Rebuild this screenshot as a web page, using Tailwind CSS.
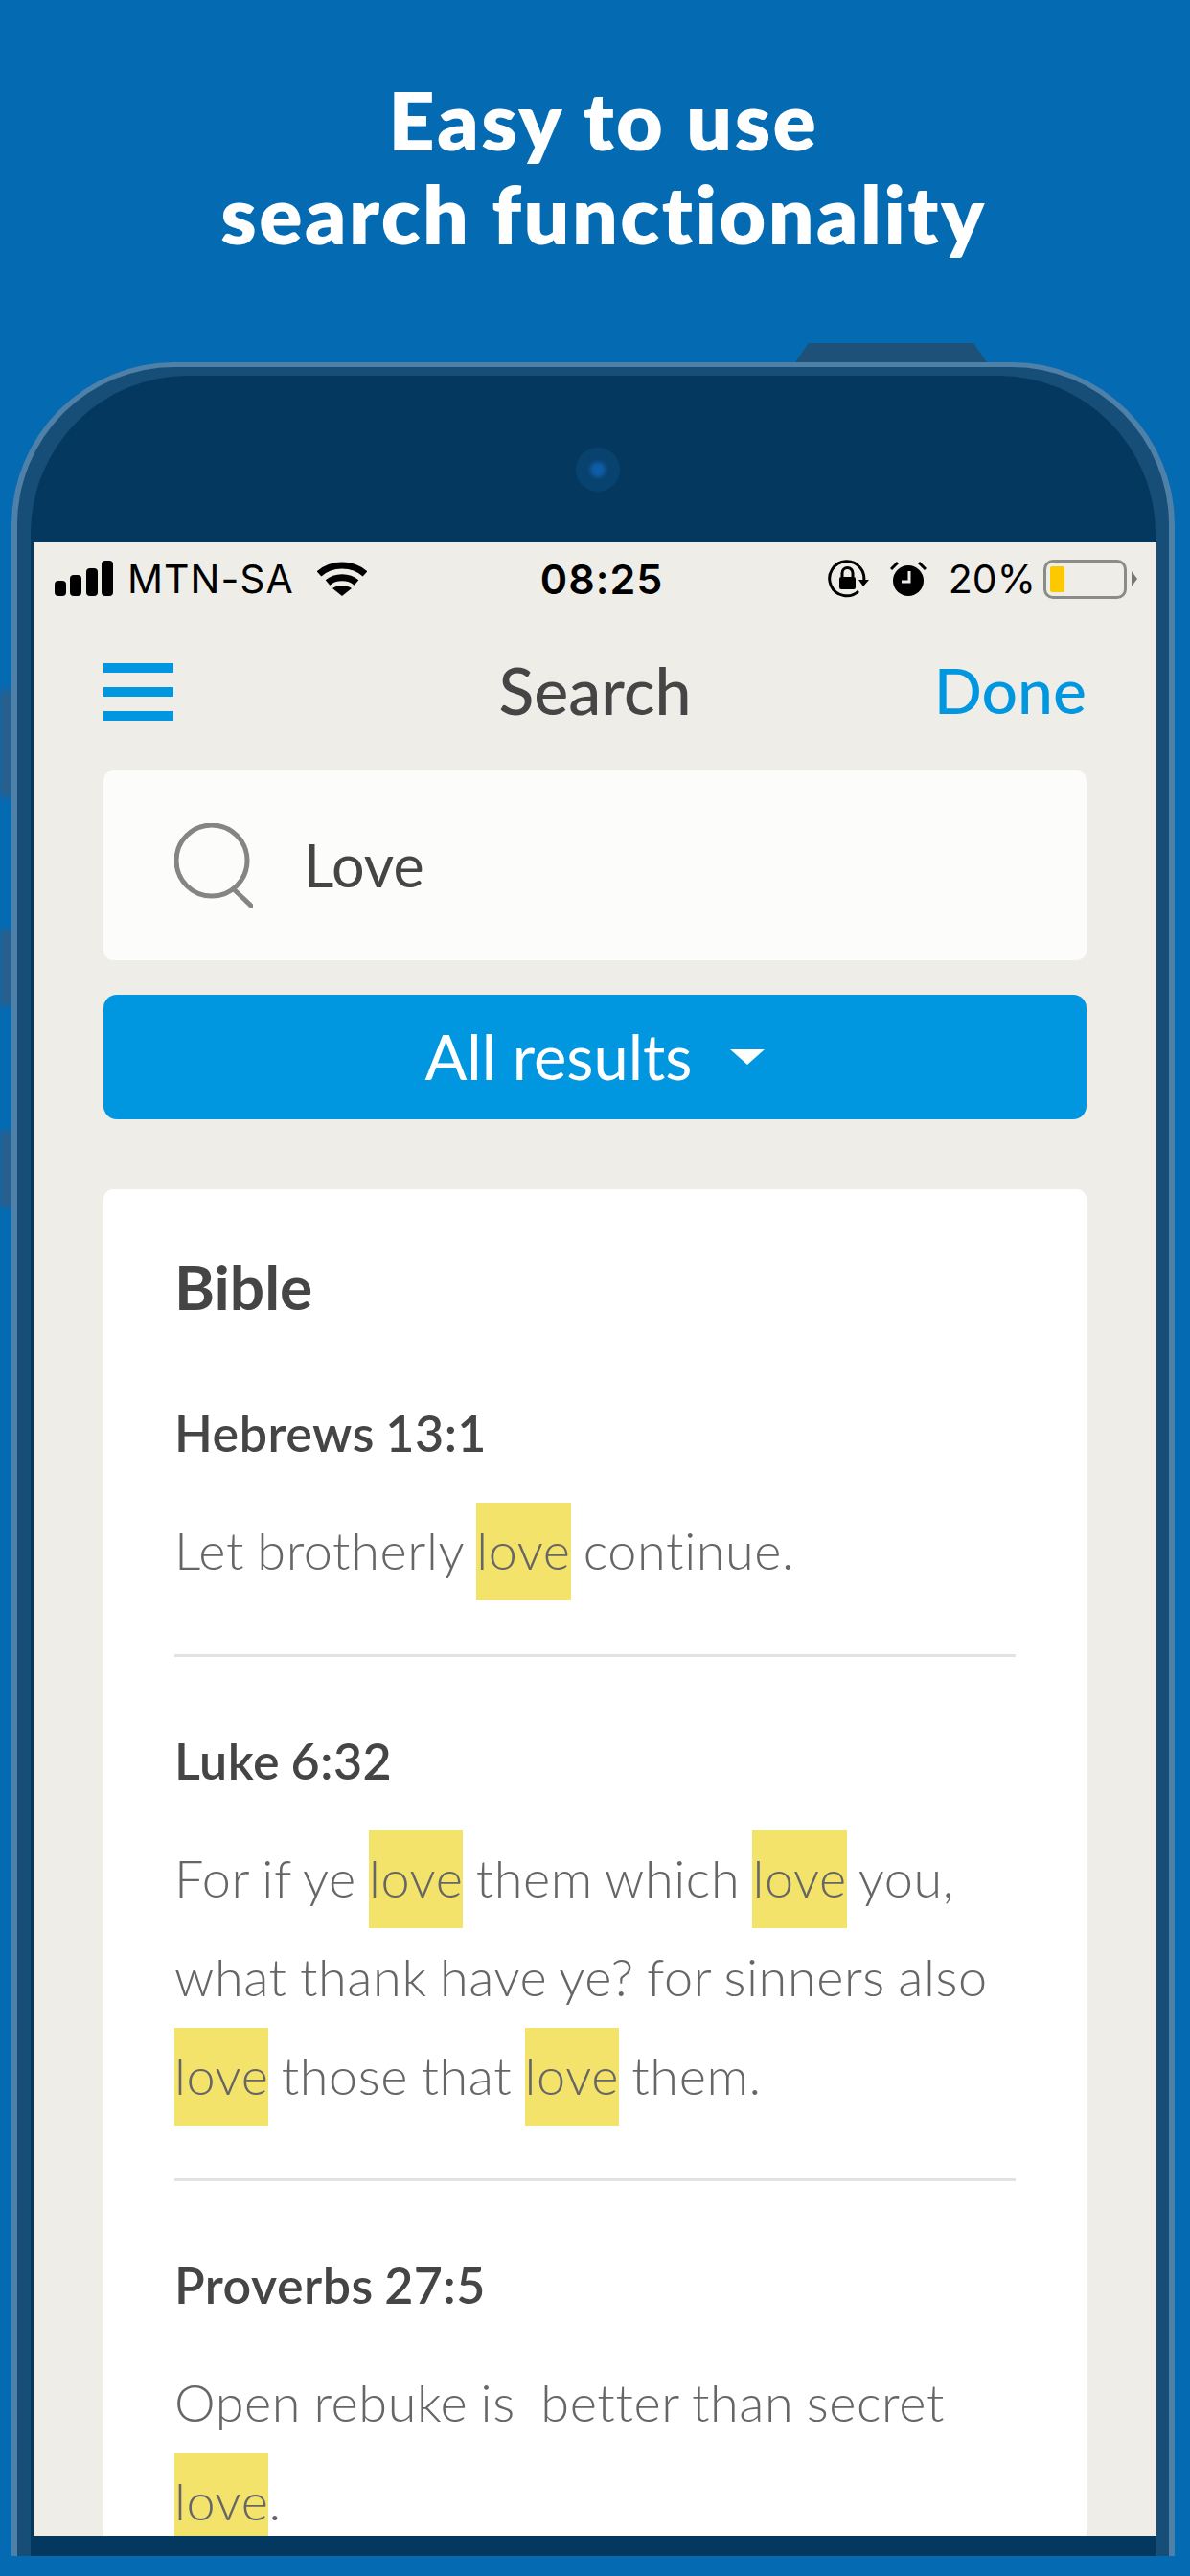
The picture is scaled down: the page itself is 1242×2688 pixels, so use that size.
<!DOCTYPE html>
<html lang="en">
<head>
    <meta charset="UTF-8">
    <meta name="viewport" content="width=device-width, initial-scale=1.0">
    <title>Easy to use search functionality</title>
    <script src="https://cdn.jsdelivr.net/npm/@tailwindcss/browser@4"></script>
</head>
<body class="relative w-[1242px] h-[2688px] overflow-hidden bg-[#046bb3] font-['Lato',sans-serif]">

    <!-- side buttons, blurred behind the phone -->
    <div class="absolute left-0 top-[720px] w-[14px] h-[112px] bg-[#2a5f8c] blur-[3px]"></div>
    <div class="absolute left-0 top-[970px] w-[14px] h-[80px] bg-[#2a5f8c] blur-[3px]"></div>
    <div class="absolute left-0 top-[1180px] w-[14px] h-[80px] bg-[#2a5f8c] blur-[3px]"></div>

    <!-- headline -->
    <h1 class="relative pt-[76px] pl-[18px] h-[358px] text-center text-white text-[84px] leading-[98px] font-extrabold tracking-[2.5px]">
        Easy to use<br>search functionality
    </h1>

    <!-- phone -->
    <div class="relative ml-[12px] w-[1214px] h-[2289px] mt-[20px] pt-[183px] pl-[17px] bg-[#04385f] rounded-t-[170px] border-t-[5px] border-x-[6px] border-[#4f81a8] shadow-[inset_14px_9px_0_#174e78,inset_-14px_9px_0_#174e78]">
        <svg class="absolute -top-[25px] left-[812px] w-[200px] h-[20px]" viewBox="0 0 200 20" fill="#1d5178"><path d="M0 20 L14 0 H186 L200 20 Z"/></svg>
        <div class="absolute top-[84px] left-[583px] w-[46px] h-[46px] rounded-full bg-[#08426f] flex items-center justify-center">
            <div class="w-[16px] h-[16px] rounded-full bg-[#0f5da6] blur-[2px]"></div>
        </div>

        <!-- screen -->
        <div class="w-[1172px] h-[2080px] overflow-hidden bg-[#eeede8]">

            <!-- status bar -->
            <div class="h-[78px] pl-[22px] pr-[20px] pt-[16px] flex items-start justify-between text-black text-[41px] leading-[44px] font-['Inter',sans-serif]">
                <div class="w-[400px] flex items-center">
                    <svg class="w-[62px] h-[38px]" viewBox="0 0 62 38" fill="#000">
                        <rect x="0" y="21" width="12" height="16" rx="4"/>
                        <rect x="16" y="15" width="12" height="22" rx="4"/>
                        <rect x="33" y="8" width="12" height="29" rx="4"/>
                        <rect x="49" y="0" width="12" height="37" rx="4"/>
                    </svg>
                    <span class="ml-[14px] tracking-[1px]">MTN-SA</span>
                    <svg class="ml-[24px] w-[52px] h-[38px]" viewBox="0 0 52 38" fill="none" stroke="#000" stroke-width="7">
                        <path d="M2 14 C15 2 37 2 50 14"/>
                        <path d="M11 23 C19 16 33 16 41 23"/>
                        <path d="M26 37 L16 29 C21 25 31 25 36 29 Z" fill="#000" stroke="none"/>
                    </svg>
                </div>
                <div class="ml-[12px] text-[43px] font-semibold tracking-[1px]">08:25</div>
                <div class="w-[400px] flex items-center justify-end">
                    <svg class="w-[44px] h-[40px]" viewBox="0 0 44 40" fill="none" stroke="#000" stroke-width="3">
                        <path d="M37 25 A18 18 0 1 0 32 33"/>
                        <path d="M32 21 L43 21 L37 28 Z" fill="#000" stroke="none"/>
                        <rect x="12" y="18" width="17" height="13" rx="2" fill="#000" stroke="none"/>
                        <path d="M15 18 V14 A5.5 5.5 0 0 1 26 14 V18"/>
                    </svg>
                    <svg class="ml-[21px] w-[38px] h-[38px]" viewBox="0 0 38 38" fill="#000">
                        <circle cx="19" cy="21" r="16"/>
                        <path d="M1 9 L8 2 M37 9 L30 2" stroke="#000" stroke-width="3"/>
                        <path d="M20 11 V22 H12" stroke="#eeede8" stroke-width="3" fill="none"/>
                    </svg>
                    <span class="ml-[23px]">20%</span>
                    <div class="ml-[8px] w-[87px] h-[41px] border-[3px] border-[#8b8b88] rounded-[10px] p-[4px]">
                        <div class="w-[15px] h-[27px] bg-[#fcc800] rounded-[2px]"></div>
                    </div>
                    <svg class="ml-[5px] w-[6px] h-[16px]" viewBox="0 0 6 16" fill="#777"><path d="M0 0 L6 8 L0 16 Z"/></svg>
                </div>
            </div>

            <div class="px-[73px]">

                <!-- nav -->
                <div class="h-[160px] grid grid-cols-[1fr_auto_1fr] items-start pt-[48px] text-[68px] leading-[72px]">
                    <div class="w-[73px] flex flex-col gap-[15px]">
                        <div class="h-[10px] bg-[#0096e0]"></div>
                        <div class="h-[10px] bg-[#0096e0]"></div>
                        <div class="h-[10px] bg-[#0096e0]"></div>
                    </div>
                    <div class="-mt-[8px] text-[#454545] font-medium">Search</div>
                    <div class="-mt-[8px] justify-self-end text-[66px] text-[#0096e0] font-medium">Done</div>
                </div>

                <!-- search field -->
                <div class="h-[198px] bg-[#fcfcfa] rounded-[10px] flex items-center pl-[74px]">
                    <svg class="w-[82px] h-[88px]" viewBox="0 0 82 88" fill="none" stroke="#858585" stroke-width="5">
                        <circle cx="39" cy="39" r="37"/>
                        <path d="M62 69 L80 86" stroke-linecap="round"/>
                    </svg>
                    <span class="ml-[53px] text-[61px] text-[#454545]">Love</span>
                </div>

                <!-- filter -->
                <div class="mt-[36px] h-[130px] bg-[#0096e0] rounded-[14px] flex items-center justify-center text-white text-[65px]">
                    All results
                    <svg class="ml-[38px] w-[38px] h-[16px]" viewBox="0 0 38 16" fill="#fff"><path d="M1 0 H37 L19 16 Z"/></svg>
                </div>

                <!-- results -->
                <div class="mt-[73px] bg-white rounded-t-[10px] px-[74px] pt-[66px] text-[#666666] text-[54px] leading-[103px] tracking-[0.6px] [word-spacing:-2px] font-light">
                    <h2 class="text-[64px] leading-[72px] tracking-normal font-bold text-[#454545]">Bible</h2>

                    <div class="pb-[57px] border-b-[3px] border-[#e2e2e0]">
                        <h3 class="mt-[80px] mb-[35px] text-[52px] leading-[72px] tracking-[0.5px] font-semibold text-[#454545]">Hebrews 13:1</h3>
                        <p>Let brotherly <mark class="inline-block leading-[99px] pb-[3px] -mb-[4px] bg-[#f4e36a] text-[#666666]">love</mark> continue.</p>
                    </div>

                    <div class="pb-[56px] border-b-[3px] border-[#e2e2e0]">
                        <h3 class="mt-[72px] mb-[35px] text-[52px] leading-[72px] tracking-[0.5px] font-semibold text-[#454545]">Luke 6:32</h3>
                        <p>For if ye <mark class="inline-block leading-[99px] pb-[3px] -mb-[4px] bg-[#f4e36a] text-[#666666]">love</mark> them which <mark class="inline-block leading-[99px] pb-[3px] -mb-[4px] bg-[#f4e36a] text-[#666666]">love</mark> you, what thank have ye? for sinners also <mark class="inline-block leading-[99px] pb-[3px] -mb-[4px] bg-[#f4e36a] text-[#666666]">love</mark> those that <mark class="inline-block leading-[99px] pb-[3px] -mb-[4px] bg-[#f4e36a] text-[#666666]">love</mark> them.</p>
                    </div>

                    <div>
                        <h3 class="mt-[72px] mb-[35px] text-[52px] leading-[72px] tracking-[0.5px] font-semibold text-[#454545]">Proverbs 27:5</h3>
                        <p>Open rebuke is &nbsp;better than secret <mark class="inline-block leading-[99px] pb-[3px] -mb-[4px] bg-[#f4e36a] text-[#666666]">love</mark>.</p>
                    </div>
                </div>
            </div>
        </div>
    </div>

</body>
</html>
